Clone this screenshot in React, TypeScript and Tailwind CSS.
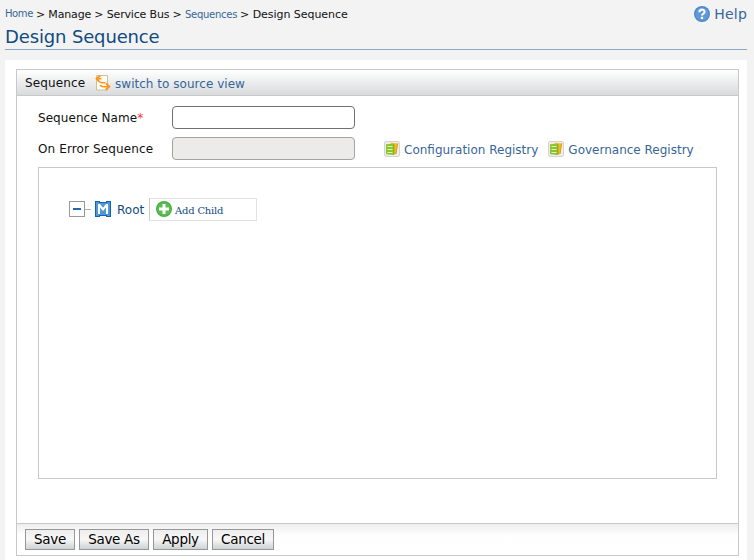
import type { ReactNode } from 'react';

function HelpIcon() {
  return (
    <svg width="16" height="16" viewBox="0 0 16 16" className="shrink-0">
      <circle cx="8" cy="8" r="8" fill="#4a8bcd" />
      <circle cx="8" cy="8" r="6.6" fill="#6298d3" />
      <path d="M5.4 6.3c0-3.6 5.4-3.4 5.2-.3-.1 1.7-2.6 1.8-2.6 3.6" fill="none" stroke="#fff" strokeWidth="2.1" />
      <rect x="6.9" y="10.8" width="2.2" height="2.2" fill="#fff" />
    </svg>
  );
}

function SwitchIcon() {
  return (
    <svg width="16" height="16" viewBox="0 0 16 16" className="shrink-0">
      <path d="M1.5 .5h11v14.5h-11z" fill="#fffdf8" stroke="#cfc38c" />
      <path d="M5.2 .8 1.6 3.6l2.6 3" fill="none" stroke="#ff941f" strokeWidth="2" />
      <path d="M11 8.6l3.2 3-3.4 3.2" fill="none" stroke="#ff941f" strokeWidth="2" />
      <path d="M2 3.7h4.5M4 6.4c.8 1 2 1.3 3.5 1.3h3M5 10.3c.8 1 1.8 1.4 3.5 1.4H14" fill="none" stroke="#ff941f" strokeWidth="1.5" />
    </svg>
  );
}

function RegistryIcon() {
  return (
    <svg width="16" height="16" viewBox="0 0 16 16" className="shrink-0">
      <rect x=".5" y=".5" width="15" height="15" rx="1.5" fill="#eeeeee" stroke="#d3d3d3" />
      <path d="M6.5 1.8 14 2.5 12.4 13 8 13.8z" fill="#f4bb25" />
      <path d="m13 2.4 1 .2L12.4 13l-.8.2z" fill="#df981b" />
      <path d="M2 3.3 9.5 2.7v11.4L2 13.2z" fill="#8ac52c" />
      <path d="m9.5 2.7.8.7v10l-.8.7z" fill="#5ba42c" />
      <path d="M3.5 5.5h5M3.5 8.5h5M3.5 11.5h5" stroke="#e2f5bc" />
    </svg>
  );
}

function MediatorIcon() {
  return (
    <svg width="16" height="16" viewBox="0 0 16 16" className="shrink-0">
      <path d="M0 0h5v1h6V0h5v16h-5v-1H5v1H0z" fill="#1263ab" />
      <path d="M1 1h3v1h8V1h3v14h-3v-1H4v1H1z" fill="#5197d6" />
      <path d="M3 3h2l3 3.7L11 3h2v10h-2V6.5L8 10 5 6.5V13H3z" fill="#fff" />
    </svg>
  );
}

function AddIcon() {
  return (
    <svg width="16" height="16" viewBox="0 0 16 16" className="shrink-0">
      <circle cx="8" cy="8" r="8" fill="#48ae46" />
      <circle cx="8" cy="8" r="6.8" fill="#5dbb51" />
      <path d="M8 3v10M3 8h10" stroke="#fff" strokeWidth="3" />
    </svg>
  );
}

function RegistryLink({ children }: { children: ReactNode }) {
  return (
    <a className="flex h-4 items-center gap-1 text-[#386698]">
      <RegistryIcon />
      <span className="whitespace-nowrap pt-0.5">{children}</span>
    </a>
  );
}

function FooterButton({ label, width }: { label: string; width: string }) {
  return (
    <button className={`${width} flex h-[21px] items-center justify-center whitespace-nowrap border border-[#979797] bg-linear-to-b from-[#eeeeee] via-[#f7f7f7] to-[#cfd1d2] text-[13.5px] tracking-[-0.3px] text-black`}>
      {label}
    </button>
  );
}

export default function App() {
  return (
    <div className="h-[560px] w-[754px] overflow-hidden bg-[#f3f3f3] pr-[7px] pl-[5px] font-['DejaVu_Sans',sans-serif] text-xs text-[#111]">
      <header className="flex h-[50px] justify-between border-b border-[#8fa7c9]">
        <div className="pt-1.5">
          <nav className="flex h-4 items-center whitespace-nowrap text-[11px]">
            <a className="w-[31px] text-[10px] tracking-[-0.4px] text-[#386698]">Home</a>
            <span className="w-[149px] pt-0.5 tracking-[-0.17px]">&gt; Manage &gt; Service Bus &gt;</span>
            <a className="w-[55px] pt-0.5 text-[10px] tracking-[-0.27px] text-[#386698]">Sequences</a>
            <span className="pt-0.5 tracking-[-0.04px]">&gt; Design Sequence</span>
          </nav>
          <h1 className="mt-1 text-[18px] leading-[22px] tracking-[-0.14px] text-[#114b80]">Design Sequence</h1>
        </div>
        <a className="mt-1.5 flex h-4 items-center gap-1 text-[14px] tracking-[0.2px] text-[#386698]">
          <HelpIcon />
          Help
        </a>
      </header>

      <main className="mt-2.5 h-[500px] bg-white px-[11px] pt-[9px] pr-2">
        <section className="flex h-[487px] w-[723px] flex-col border border-[#c8c8c8]">
          <div className="flex h-[26px] shrink-0 items-center border-b border-[#c8c8c8] bg-linear-to-b from-white to-[#d9dadc] pl-2">
            <span className="w-[70px] tracking-[0.15px]">Sequence</span>
            <a className="flex items-center gap-1 tracking-[0.03px] text-[#386698]">
              <SwitchIcon />
              <span className="pt-0.5">switch to source view</span>
            </a>
          </div>

          <div className="flex-1 px-[21px] pt-2.5">
            <div className="flex h-[23px] items-center">
              <label className="w-[134px] tracking-[0.06px]">Sequence Name<span className="text-[#ff3030]">*</span></label>
              <input className="h-[23px] w-[183px] rounded-[4px] border border-[#70706f] bg-white px-1 outline-none" />
            </div>
            <div className="mt-2 flex h-[23px] items-center">
              <label className="w-[134px] tracking-[0.13px]">On Error Sequence</label>
              <input disabled className="h-[23px] w-[183px] rounded-[4px] border border-[#a3a3a0] bg-[#ecebe9] px-1" />
              <div className="ml-[29px] flex gap-2.5">
                <RegistryLink>Configuration Registry</RegistryLink>
                <RegistryLink>Governance Registry</RegistryLink>
              </div>
            </div>

            <div className="mt-[7px] h-[312px] w-[679px] border border-[#c8c8c8] pt-[30px] pl-[30px]">
              <div className="flex h-[23px] items-center">
                <div className="mb-px flex size-4 items-center justify-center border border-[#999]">
                  <span className="h-0.5 w-2 bg-[#2468b0]" />
                </div>
                <span className="mr-1 h-px w-1.5 bg-[#aaa]" />
                <div className="mb-px">
                  <MediatorIcon />
                </div>
                <span className="ml-1.5 w-8 text-[#114b80]">Root</span>
                <a className="flex h-[23px] w-[108px] items-center gap-[3px] border border-[#e2e2e2] border-l-[#ccc] pl-1.5 font-['DejaVu_Serif',serif] text-[10px] tracking-[-0.2px] text-[#114b80]">
                  <div className="mb-px">
                    <AddIcon />
                  </div>
                  <span className="pt-0.5">Add Child</span>
                </a>
              </div>
            </div>
          </div>

          <footer className="flex h-8 shrink-0 gap-1 border-t border-[#c8c8c8] bg-linear-to-b from-[#eeeeee] via-[#fefefe] via-35% to-white pt-[5px] pl-2">
            <FooterButton label="Save" width="w-[50px]" />
            <FooterButton label="Save As" width="w-[70px]" />
            <FooterButton label="Apply" width="w-[55px]" />
            <FooterButton label="Cancel" width="w-[62px]" />
          </footer>
        </section>
      </main>
    </div>
  );
}
